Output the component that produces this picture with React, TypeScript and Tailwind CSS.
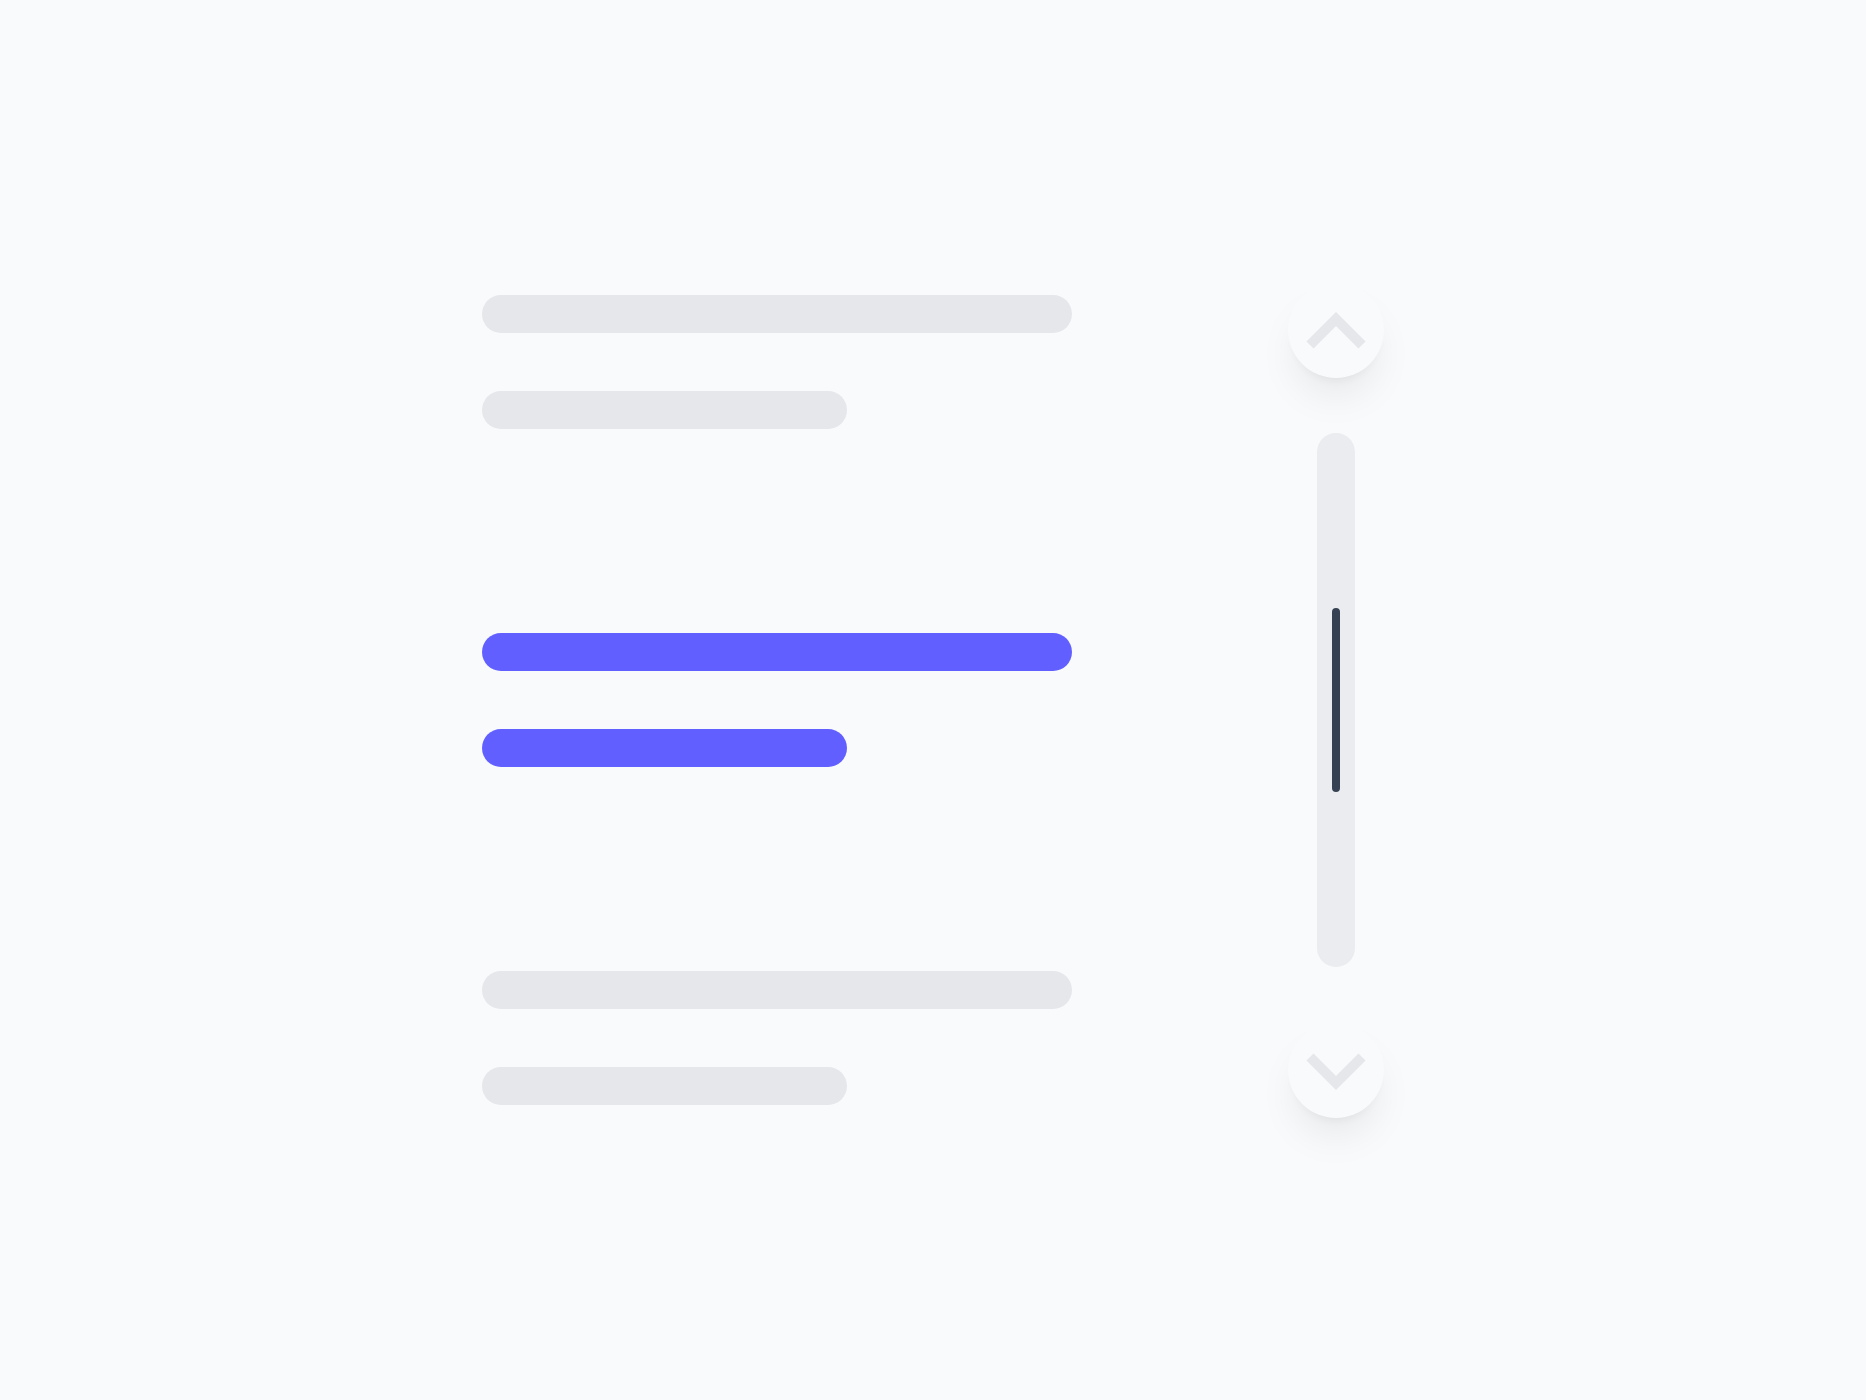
const groups = [
  { active: false },
  { active: true },
  { active: false },
];

function Bar({ wide, active }: { wide: boolean; active: boolean }) {
  return (
    <div
      className={`h-[38px] rounded-full ${wide ? "w-[590px]" : "w-[365px]"} ${
        active ? "bg-[#615fff]" : "bg-gray-200"
      }`}
    />
  );
}

function ArrowButton({ direction }: { direction: "up" | "down" }) {
  return (
    <button className="w-24 h-24 rounded-full bg-gray-50 shadow-[0_24px_40px_-8px_rgba(0,0,0,0.08),0_8px_10px_-6px_rgba(0,0,0,0.05)] flex items-center justify-center">
      <svg width="96" height="96" viewBox="0 0 96 96" fill="none">
        <path
          d={direction === "up" ? "M22 63 L48 37 L74 63" : "M22 35 L48 61 L74 35"}
          stroke="#e5e7eb"
          strokeWidth="10"
          strokeLinejoin="miter"
          strokeLinecap="butt"
        />
      </svg>
    </button>
  );
}

export default function App() {
  return (
    <div className="min-h-[1400px] bg-gray-50 flex items-center justify-center">
      <div className="flex items-center gap-[216px]">
        <div className="flex flex-col gap-[204px]">
          {groups.map((group, i) => (
            <div key={i} className="flex flex-col gap-[58px]">
              <Bar wide active={group.active} />
              <Bar wide={false} active={group.active} />
            </div>
          ))}
        </div>

        <div className="flex flex-col items-center gap-[55px]">
          <ArrowButton direction="up" />
          <div className="w-[38px] h-[534px] rounded-full bg-[#ebecef] flex items-center justify-center">
            <div className="w-2 h-[184px] rounded-full bg-gray-700" />
          </div>
          <ArrowButton direction="down" />
        </div>
      </div>
    </div>
  );
}
